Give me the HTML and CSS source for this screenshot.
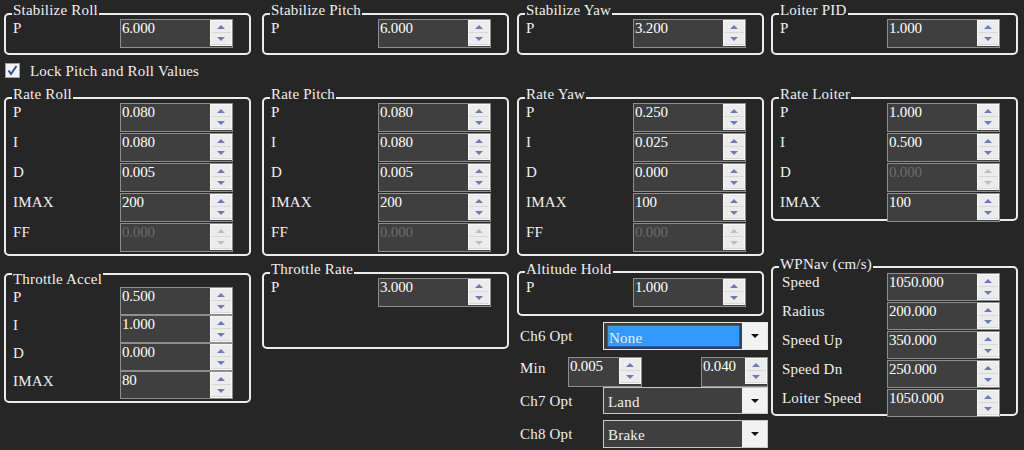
FILE: index.html
```html
<!DOCTYPE html>
<html lang="en">
<head>
  <meta charset="UTF-8">
  <title>Extended Tuning</title>
  <link rel="stylesheet" href="styles.css">
</head>
<body>

  <div class="band band-top">
    <div class="group g-stab">
      <div class="title">Stabilize Roll</div>
      <div class="row"><span class="lbl">P</span><div class="spin"><span class="val">6.000</span><span class="btns"><i class="up"></i><i class="dn"></i></span></div></div>
    </div>
    <div class="group g-stab">
      <div class="title">Stabilize Pitch</div>
      <div class="row"><span class="lbl">P</span><div class="spin"><span class="val">6.000</span><span class="btns"><i class="up"></i><i class="dn"></i></span></div></div>
    </div>
    <div class="group g-stab">
      <div class="title">Stabilize Yaw</div>
      <div class="row"><span class="lbl">P</span><div class="spin"><span class="val">3.200</span><span class="btns"><i class="up"></i><i class="dn"></i></span></div></div>
    </div>
    <div class="group g-stab">
      <div class="title">Loiter PID</div>
      <div class="row"><span class="lbl">P</span><div class="spin"><span class="val">1.000</span><span class="btns"><i class="up"></i><i class="dn"></i></span></div></div>
    </div>
  </div>

  <label class="check">
    <span class="box"><svg width="13" height="13" viewBox="0 0 13 13"><path d="M2.5 6.5 L5 10 L10.5 2" fill="none" stroke="#3b4c9e" stroke-width="2"/></svg></span>
    Lock Pitch and Roll Values
  </label>

  <div class="band band-main">

    <div class="col">
      <div class="group g-rate">
        <div class="title">Rate Roll</div>
        <div class="row"><span class="lbl">P</span><div class="spin"><span class="val">0.080</span><span class="btns"><i class="up"></i><i class="dn"></i></span></div></div>
        <div class="row"><span class="lbl">I</span><div class="spin"><span class="val">0.080</span><span class="btns"><i class="up"></i><i class="dn"></i></span></div></div>
        <div class="row"><span class="lbl">D</span><div class="spin"><span class="val">0.005</span><span class="btns"><i class="up"></i><i class="dn"></i></span></div></div>
        <div class="row"><span class="lbl">IMAX</span><div class="spin"><span class="val">200</span><span class="btns"><i class="up"></i><i class="dn"></i></span></div></div>
        <div class="row"><span class="lbl">FF</span><div class="spin off"><span class="val">0.000</span><span class="btns"><i class="up"></i><i class="dn"></i></span></div></div>
      </div>
      <div class="group g-accel">
        <div class="title">Throttle Accel</div>
        <div class="row"><span class="lbl">P</span><div class="spin"><span class="val">0.500</span><span class="btns"><i class="up"></i><i class="dn"></i></span></div></div>
        <div class="row"><span class="lbl">I</span><div class="spin"><span class="val">1.000</span><span class="btns"><i class="up"></i><i class="dn"></i></span></div></div>
        <div class="row"><span class="lbl">D</span><div class="spin"><span class="val">0.000</span><span class="btns"><i class="up"></i><i class="dn"></i></span></div></div>
        <div class="row"><span class="lbl">IMAX</span><div class="spin"><span class="val">80</span><span class="btns"><i class="up"></i><i class="dn"></i></span></div></div>
      </div>
    </div>

    <div class="col">
      <div class="group g-rate">
        <div class="title">Rate Pitch</div>
        <div class="row"><span class="lbl">P</span><div class="spin"><span class="val">0.080</span><span class="btns"><i class="up"></i><i class="dn"></i></span></div></div>
        <div class="row"><span class="lbl">I</span><div class="spin"><span class="val">0.080</span><span class="btns"><i class="up"></i><i class="dn"></i></span></div></div>
        <div class="row"><span class="lbl">D</span><div class="spin"><span class="val">0.005</span><span class="btns"><i class="up"></i><i class="dn"></i></span></div></div>
        <div class="row"><span class="lbl">IMAX</span><div class="spin"><span class="val">200</span><span class="btns"><i class="up"></i><i class="dn"></i></span></div></div>
        <div class="row"><span class="lbl">FF</span><div class="spin off"><span class="val">0.000</span><span class="btns"><i class="up"></i><i class="dn"></i></span></div></div>
      </div>
      <div class="group g-thr">
        <div class="title">Throttle Rate</div>
        <div class="row"><span class="lbl">P</span><div class="spin"><span class="val">3.000</span><span class="btns"><i class="up"></i><i class="dn"></i></span></div></div>
      </div>
    </div>

    <div class="col">
      <div class="group g-rate">
        <div class="title">Rate Yaw</div>
        <div class="row"><span class="lbl">P</span><div class="spin"><span class="val">0.250</span><span class="btns"><i class="up"></i><i class="dn"></i></span></div></div>
        <div class="row"><span class="lbl">I</span><div class="spin"><span class="val">0.025</span><span class="btns"><i class="up"></i><i class="dn"></i></span></div></div>
        <div class="row"><span class="lbl">D</span><div class="spin"><span class="val">0.000</span><span class="btns"><i class="up"></i><i class="dn"></i></span></div></div>
        <div class="row"><span class="lbl">IMAX</span><div class="spin"><span class="val">100</span><span class="btns"><i class="up"></i><i class="dn"></i></span></div></div>
        <div class="row"><span class="lbl">FF</span><div class="spin off"><span class="val">0.000</span><span class="btns"><i class="up"></i><i class="dn"></i></span></div></div>
      </div>
      <div class="group g-alt">
        <div class="title">Altitude Hold</div>
        <div class="row"><span class="lbl">P</span><div class="spin"><span class="val">1.000</span><span class="btns"><i class="up"></i><i class="dn"></i></span></div></div>
      </div>

      <div class="opt opt-ch6">
        <span class="opt-lbl">Ch6 Opt</span>
        <div class="combo sel"><span class="combo-text">None</span><span class="drop"><i></i></span></div>
      </div>
      <div class="opt opt-min">
        <span class="min-lbl">Min</span>
        <div class="spin small"><span class="val">0.005</span><span class="btns"><i class="up"></i><i class="dn"></i></span></div>
        <span class="fill"></span>
        <div class="spin small max"><span class="val">0.040</span><span class="btns"><i class="up"></i><i class="dn"></i></span></div>
      </div>
      <div class="opt opt-ch7">
        <span class="opt-lbl">Ch7 Opt</span>
        <div class="combo"><span class="combo-text">Land</span><span class="drop"><i></i></span></div>
      </div>
      <div class="opt opt-ch8">
        <span class="opt-lbl">Ch8 Opt</span>
        <div class="combo"><span class="combo-text">Brake</span><span class="drop"><i></i></span></div>
      </div>
    </div>

    <div class="col">
      <div class="group g-loiter">
        <div class="title">Rate Loiter</div>
        <div class="row"><span class="lbl">P</span><div class="spin"><span class="val">1.000</span><span class="btns"><i class="up"></i><i class="dn"></i></span></div></div>
        <div class="row"><span class="lbl">I</span><div class="spin"><span class="val">0.500</span><span class="btns"><i class="up"></i><i class="dn"></i></span></div></div>
        <div class="row"><span class="lbl">D</span><div class="spin off"><span class="val">0.000</span><span class="btns"><i class="up"></i><i class="dn"></i></span></div></div>
        <div class="row"><span class="lbl">IMAX</span><div class="spin"><span class="val">100</span><span class="btns"><i class="up"></i><i class="dn"></i></span></div></div>
      </div>
      <div class="group g-wpnav">
        <div class="title">WPNav (cm/s)</div>
        <div class="row"><span class="lbl">Speed</span><div class="spin"><span class="val">1050.000</span><span class="btns"><i class="up"></i><i class="dn"></i></span></div></div>
        <div class="row"><span class="lbl">Radius</span><div class="spin"><span class="val">200.000</span><span class="btns"><i class="up"></i><i class="dn"></i></span></div></div>
        <div class="row"><span class="lbl">Speed Up</span><div class="spin"><span class="val">350.000</span><span class="btns"><i class="up"></i><i class="dn"></i></span></div></div>
        <div class="row"><span class="lbl">Speed Dn</span><div class="spin"><span class="val">250.000</span><span class="btns"><i class="up"></i><i class="dn"></i></span></div></div>
        <div class="row"><span class="lbl">Loiter Speed</span><div class="spin"><span class="val">1050.000</span><span class="btns"><i class="up"></i><i class="dn"></i></span></div></div>
      </div>
    </div>

  </div>

</body>
</html>
```

FILE: styles.css
```css
body {
  margin: 0;
  padding: 0 0 0 4px;
  background: #262626;
  color: #f0f0f0;
  font-family: "Liberation Serif", "Times New Roman", Tinos, "DejaVu Serif", "Noto Serif", serif;
  font-size: 15px;
  line-height: 16px;
  letter-spacing: 0.2px;
  overflow: hidden;
}
.band {
  display: grid;
  grid-template-columns: 258px 255px 254px 246px;
  align-items: start;
}
.band-top {
  margin-top: 13px;
}
.band-main {
  margin-top: 18px;
}
.col {
  display: flex;
  flex-direction: column;
  align-items: flex-start;
}

/* group box */
.group {
  width: 247px;
  box-sizing: border-box;
  border: 2px solid #ececec;
  border-radius: 5px;
}
.title {
  margin: -13px 0 0 6px;
  width: fit-content;
  padding: 0 1px;
  background: #262626;
  white-space: nowrap;
}
.row {
  display: flex;
  height: 30px;
}
.lbl {
  width: 114px;
  box-sizing: border-box;
  padding: 2px 0 0 7px;
  white-space: nowrap;
}
.g-stab { padding-bottom: 5px; }
.g-rate { padding-bottom: 2px; }
.g-accel { margin-top: 17px; padding: 9px 0 2px; }
.g-accel .row { height: 28px; }
.g-accel .spin { margin-top: 0; height: 28px; }
.g-thr { margin-top: 16px; padding-bottom: 40px; }
.g-alt { margin-top: 15px; padding: 1px 0 7px; }
.g-loiter .row:last-child { margin-bottom: -3px; }
.g-wpnav { margin-top: 45px; padding-top: 1px; }
.g-wpnav .lbl { padding-left: 9px; }
.g-wpnav .row { height: 29px; }
.g-wpnav .spin { height: 28px; }
.g-wpnav .row:last-child { margin-bottom: -3px; }

/* numeric up-down */
.spin {
  display: flex;
  width: 113px;
  height: 29px;
  margin-top: 1px;
  box-sizing: border-box;
  border: 1px solid #8e8e8e;
  background: #3f3f3f;
}
.val {
  flex: 1;
  padding: 0 0 0 1px;
  color: #ffffff;
  letter-spacing: -0.2px;
}
.btns {
  display: flex;
  flex-direction: column;
  width: 22px;
  height: 26px;
  background: #e4e4e4;
  border: 1px solid #f8f8f8;
  box-sizing: border-box;
}
.btns i {
  flex: 1;
  display: flex;
  align-items: center;
  justify-content: center;
  background: #ececec;
  border-bottom: 1px solid #d8d8d8;
}
.btns i::after {
  content: "";
  border-left: 4px solid transparent;
  border-right: 4px solid transparent;
}
.btns .up::after {
  border-bottom: 4px solid #6a7cb4;
}
.btns .dn::after {
  border-top: 4px solid #6a7cb4;
}
.off .val {
  color: #6c6c6c;
}
.off .btns .up::after {
  border-bottom-color: #bdbdbd;
}
.off .btns .dn::after {
  border-top-color: #bdbdbd;
}

/* checkbox */
.check {
  display: flex;
  align-items: center;
  gap: 10px;
  height: 17px;
  margin: 7px 0 0 1px;
}
.check .box {
  display: flex;
  align-items: center;
  justify-content: center;
  width: 15px;
  height: 15px;
  box-sizing: border-box;
  background: #f4f4f4;
  border: 1px solid #a0a0a0;
}

/* channel options */
.opt {
  display: flex;
  align-items: center;
  width: 251px;
}
.opt-lbl {
  width: 86px;
  box-sizing: border-box;
  padding-left: 3px;
  white-space: nowrap;
}
.opt-ch6 { margin-top: 6px; height: 28px; }
.opt-min { margin-top: 7px; height: 30px; align-items: flex-start; }
.opt-ch7 { height: 27px; }
.opt-ch8 { margin-top: 6px; height: 28px; }

.min-lbl {
  width: 51px;
  box-sizing: border-box;
  padding: 3px 0 0 3px;
}
.spin.small {
  width: 74px;
  height: 30px;
  margin-top: 0;
}
.spin.small.max {
  width: 67px;
}
.fill {
  flex: 1;
}

.combo {
  display: flex;
  width: 165px;
  height: 100%;
  box-sizing: border-box;
  border: 1px solid #c8c8c8;
  background: #3f3f3f;
}
.combo-text {
  flex: 1;
  padding: 6px 0 0 4px;
}
.combo.sel {
  border-color: #e8e8e8;
}
.combo.sel .combo-text {
  margin: 2px 2px 2px 3px;
  padding: 4px 0 0 1px;
  background: #3399ff;
  border: 1px solid #1f5f9f;
}
.drop {
  display: flex;
  align-items: center;
  justify-content: center;
  width: 25px;
  background: #f2f2f2;
}
.drop i::after {
  content: "";
  display: block;
  border-left: 4px solid transparent;
  border-right: 4px solid transparent;
  border-top: 4px solid #111111;
}
```
